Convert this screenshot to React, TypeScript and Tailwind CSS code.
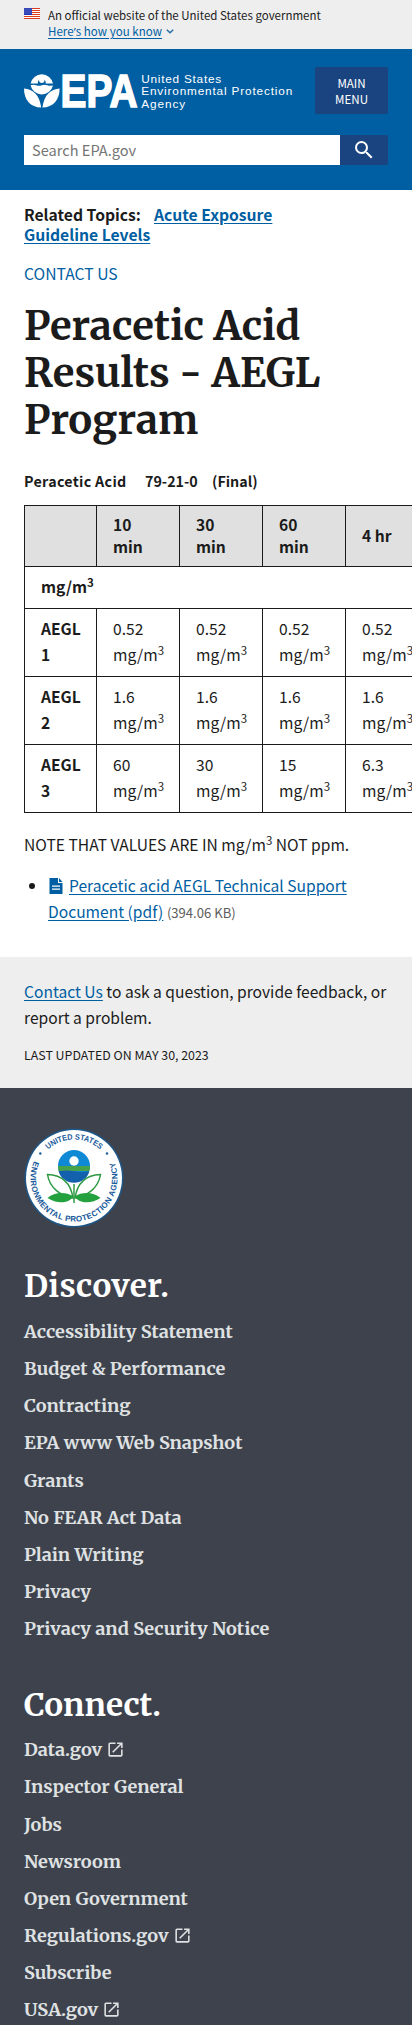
import React from "react";

const discover = [
  "Accessibility Statement",
  "Budget & Performance",
  "Contracting",
  "EPA www Web Snapshot",
  "Grants",
  "No FEAR Act Data",
  "Plain Writing",
  "Privacy",
  "Privacy and Security Notice",
];

const connect = [
  { label: "Data.gov", external: true },
  { label: "Inspector General" },
  { label: "Jobs" },
  { label: "Newsroom" },
  { label: "Open Government" },
  { label: "Regulations.gov", external: true },
  { label: "Subscribe" },
  { label: "USA.gov", external: true },
];

const levels = [
  { name: "1", values: ["0.52", "0.52", "0.52", "0.52"] },
  { name: "2", values: ["1.6", "1.6", "1.6", "1.6"] },
  { name: "3", values: ["60", "30", "15", "6.3"] },
];

function Flag() {
  return (
    <svg className="mt-2 block h-[11px] w-4 shrink-0" viewBox="0 0 16 11">
      <rect width="16" height="11" fill="#fff" />
      {[0, 2, 4, 6, 8, 10].map((y) => (
        <rect key={y} y={y} width="16" height="1" fill="#db3e1f" />
      ))}
      <rect width="8" height="7" fill="#1e33b1" />
      {[1, 3, 5].map((y) =>
        [1, 3, 5, 7].map((x) => <circle key={`${x}-${y}`} cx={x} cy={y} r=".45" fill="#fff" />)
      )}
    </svg>
  );
}

function EpaLogo() {
  return (
    <svg
      className="mt-[22px] block h-[42px] w-[272px] shrink-0 overflow-visible"
      viewBox="24 71 272 42"
      fill="#fff"
      fontFamily="'Liberation Sans', Arial, sans-serif"
    >
      <path d="M30.6 83.6a11.4 11.4 0 0 1 22.4 0h-7.3a4 4 0 1 0-7.8 0z" />
      <circle cx="41.8" cy="80.2" r="2.7" />
      <path d="M30.6 85.2q2.8-1 5.6 0t5.6 0 5.6 0 5.6 0a11.4 11.4 0 0 1-22.4 0z" />
      <path d="M24 88.4c9 .6 15.500 6.200 17.200 19.200-10.800-.8-17.200-7.400-17.200-19.200z" />
      <path d="M59.600 88.400c-9 .6-15.500 6.200-17.200 19.200 10.800-.8 17.200-7.400 17.200-19.200z" />
      <text
        x="60.500"
        y="107.200"
        fontSize="46.500"
        fontWeight="bold"
        stroke="#fff"
        strokeWidth="1.600"
        textLength="77"
        lengthAdjust="spacingAndGlyphs"
      >
        EPA
      </text>
      <g fontSize="11.800">
        <text x="141.200" y="82.500" textLength="80">United States</text>
        <text x="141.200" y="95.300" textLength="151">Environmental Protection</text>
        <text x="141.200" y="108" textLength="44">Agency</text>
      </g>
    </svg>
  );
}

function Seal() {
  return (
    <svg
      className="block size-[100px]"
      viewBox="0 0 100 100"
      fontFamily="'Liberation Sans', Arial, sans-serif"
      fontWeight="bold"
    >
      <defs>
        <path id="seal-top" d="M11.500 50a38.500 38.500 0 0 1 77 0" />
        <path id="seal-bottom" d="M10.300 32.300A43.500 43.500 0 1 0 89.700 32.300" />
      </defs>
      <circle cx="50" cy="50" r="49.500" fill="#1d5687" />
      <circle cx="50" cy="50" r="48" fill="#fff" />
      <g fill="#185a9b" fontSize="8">
        <text>
          <textPath href="#seal-top" startOffset="32" textLength="57" lengthAdjust="spacingAndGlyphs">UNITED STATES</textPath>
        </text>
        <text>
          <textPath href="#seal-bottom" startOffset="1" textLength="170">
            ENVIRONMENTAL PROTECTION AGENCY
          </textPath>
        </text>
      </g>
      <circle cx="16.300" cy="25.500" r="1.200" fill="#185a9b" />
      <circle cx="83" cy="25.500" r="1.200" fill="#185a9b" />
      <circle cx="50" cy="38" r="16" fill="#1089d5" />
      <path d="M34 38h32a16 16 0 0 1-.6 5H34.600a16 16 0 0 1-.6-5z" fill="#46a24a" />
      <path d="M34.600 43.200q8-1.400 15.400 0t15.400 0a16 16 0 0 1-30.800 0z" fill="#1360ac" />
      <circle cx="50" cy="33" r="4.700" fill="#fff" />
      <g fill="#fff" stroke="#2f9a45" strokeWidth="1.500">
        <path d="M23.500 46.500c13 .5 23 7 25.500 23.500-12-2-23.500-10-25.500-23.500z" />
        <path d="M76.500 46.500c-13 .5-23 7-25.500 23.500 12-2 23.500-10 25.500-23.500z" />
      </g>
      <path d="M49.500 68.500c-8-5-19-4.500-26 1.500 9 6 21 6 26-1.500zM50.500 68.500c8-5 19-4.500 26 1.500-9 6-21 6-26-1.500z" fill="#24a13f" />
      <path d="M50 56v19" stroke="#2f9a45" strokeWidth="1.500" />
    </svg>
  );
}

function External() {
  return (
    <svg className="ml-1 block size-[19px]" viewBox="0 0 24 24" fill="#dfe1e2">
      <path d="M19 19H5V5h7V3H5a2 2 0 0 0-2 2v14a2 2 0 0 0 2 2h14c1.100 0 2-.9 2-2v-7h-2v7zM14 3v2h3.590l-9.830 9.830 1.410 1.410L19 6.410V10h2V3h-7z" />
    </svg>
  );
}

function FooterLink({ label, external }: { label: string; external?: boolean }) {
  return (
    <li className="flex h-[37.15px] items-center whitespace-nowrap">
      {label}
      {external && <External />}
    </li>
  );
}

function Unit() {
  return (
    <>
      mg/m<sup className="relative -top-[6px] align-baseline text-[11.5px] leading-none">3</sup>
    </>
  );
}

const cell = "border border-[#1b1b1b] px-4 pb-[2px] text-left";

export default function App() {
  return (
    <div className="h-[2025px] w-[412px] overflow-hidden bg-white font-['Noto_Sans_CJK_SC','Noto_Sans',sans-serif] text-[15.6px] text-[#1b1b1b]">
      <section className="flex h-[49px] gap-2 bg-[#eeeeee] pl-6">
        <Flag />
        <div className="pt-[7px] text-[11.5px] leading-4 whitespace-nowrap">
          <p>An official website of the United States government</p>
          <p className="flex text-[#005ea2]">
            <span className="tracking-[0.05px] underline underline-offset-2">
              Here<span className="font-['Noto_Sans']">’</span>s how you know
            </span>
            <svg className="mt-1 ml-1 size-2" viewBox="0 0 8 8" fill="none" stroke="#2a6ea6" strokeWidth="1.500">
              <path d="M.8 2.700 4 5.800l3.200-3.100" />
            </svg>
          </p>
        </div>
      </section>

      <header className="h-[141px] bg-[#005ea2] px-6">
        <div className="flex justify-between">
          <EpaLogo />
          <button className="mt-[18px] flex h-[47px] w-[73px] flex-col items-center justify-center rounded-[2px] bg-[#1a4480] text-[11.6px] leading-4 text-white">
            <span>MAIN</span>
            <span>MENU</span>
          </button>
        </div>
        <div className="mt-[21px] flex h-[30px]">
          <div className="flex flex-1 items-center bg-white pl-2 text-[14.6px] leading-none text-[#757575]">
            Search EPA.gov
          </div>
          <button className="flex w-12 items-center justify-center rounded-r-[2px] bg-[#1a4480]">
            <svg className="size-6" viewBox="0 0 24 24" fill="#fff">
              <path d="M15.500 14h-.79l-.28-.27A6.470 6.470 0 0 0 16 9.500 6.500 6.500 0 1 0 9.500 16c1.610 0 3.090-.59 4.230-1.570l.27.28v.79l5 4.990L20.490 19l-4.990-5zm-6 0C7.010 14 5 11.990 5 9.500S7.010 5 9.500 5 14 7.010 14 9.500 11.990 14 9.500 14z" />
            </svg>
          </button>
        </div>
      </header>

      <main className="h-[767px] pl-6">
        <p className="pt-[15px] text-[15.7px] leading-5 font-bold whitespace-nowrap">
          <span className="mr-[13px]">Related Topics:</span>
          <a className="text-[#005ea2] underline underline-offset-2">
            Acute Exposure
            <br />
            Guideline Levels
          </a>
        </p>
        <p className="mt-[19px] h-5 text-[15.7px] leading-5 text-[#005ea2]">CONTACT US</p>
        <h1 className="mt-[19px] font-[Merriweather,'DejaVu_Serif_Condensed',serif] text-[40px] leading-[47px] font-bold whitespace-nowrap">
          Peracetic Acid
          <br />
          Results - AEGL
          <br />
          Program
        </h1>
        <p className="mt-[25px] flex h-6 items-center text-[14.3px] leading-6 font-bold whitespace-nowrap">
          <span className="w-[121px] tracking-[0.3px]">Peracetic Acid</span>
          <span className="w-[67px]">79-21-0</span>
          <span>(Final)</span>
        </p>
        <table className="mt-3 w-[405px] table-fixed border-collapse">
          <colgroup>
            <col className="w-[72px]" />
            {[0, 1, 2, 3].map((i) => (
              <col key={i} className="w-[83px]" />
            ))}
          </colgroup>
          <thead>
            <tr className="h-[61px] bg-[#e0e0e0] leading-[22px]">
              <th className={cell} />
              <th className={cell}>10<br />min</th>
              <th className={cell}>30<br />min</th>
              <th className={cell}>60<br />min</th>
              <th className={cell}>4 hr</th>
            </tr>
          </thead>
          <tbody className="leading-[25.5px]">
            <tr className="h-[42px]">
              <th className={cell} colSpan={5}><Unit /></th>
            </tr>
            {levels.map((l) => (
              <tr key={l.name} className="h-[68px]">
                <th className={cell}>AEGL<br />{l.name}</th>
                {l.values.map((v, i) => (
                  <td key={i} className={cell}>{v}<br /><Unit /></td>
                ))}
              </tr>
            ))}
          </tbody>
        </table>
        <p className="mt-[18px] h-[26px] leading-[26px] whitespace-nowrap">
          NOTE THAT VALUES ARE IN <Unit /> NOT ppm.
        </p>
        <ul className="mt-[15px] list-disc pl-6">
          <li className="leading-[26px] whitespace-nowrap">
            <svg className="mr-[5px] mb-[4px] inline h-4 w-4" viewBox="0 0 16 16">
              <path d="M1.500 0H10v5h4.500v11h-13z" fill="#005ea2" />
              <path d="M11 0v4h3.500z" fill="#005ea2" />
              <path d="M4 8.200h8M4 11.200h8" stroke="#fff" strokeWidth="1.300" />
            </svg>
            <a className="text-[#005ea2] underline underline-offset-2">
              Peracetic acid AEGL Technical Support
              <br />
              Document (pdf)
            </a>{" "}
            <span className="text-[13.1px] text-[#5c5c5c]">(394.06 KB)</span>
          </li>
        </ul>
      </main>

      <section className="h-[131px] bg-[#eeeeee] pt-[22px] pl-6 whitespace-nowrap">
        <p className="leading-[25.5px]">
          <a className="text-[#005ea2] underline underline-offset-2">Contact Us</a> to ask a question, provide feedback, or
          <br />
          report a problem.
        </p>
        <p className="mt-[15px] text-[12.4px] leading-5">LAST UPDATED ON MAY 30, 2023</p>
      </section>

      <footer className="h-[937px] bg-[#3e424d] px-6 pt-10 font-[Merriweather,'DejaVu_Serif_Condensed',serif] text-[18.1px] font-bold text-[#dfe1e2]">
        <Seal />
        <div className="mt-[38px]">
          <h2 className="text-[31.5px] leading-10 tracking-[0.35px] text-white">Discover.</h2>
          <ul className="mt-[7px]">
            {discover.map((d) => (
              <FooterLink key={d} label={d} />
            ))}
          </ul>
        </div>
        <div className="mt-[38px]">
          <h2 className="text-[31.5px] leading-10 text-white">Connect.</h2>
          <ul className="mt-[6px]">
            {connect.map((c) => (
              <FooterLink key={c.label} {...c} />
            ))}
          </ul>
        </div>
      </footer>
    </div>
  );
}
